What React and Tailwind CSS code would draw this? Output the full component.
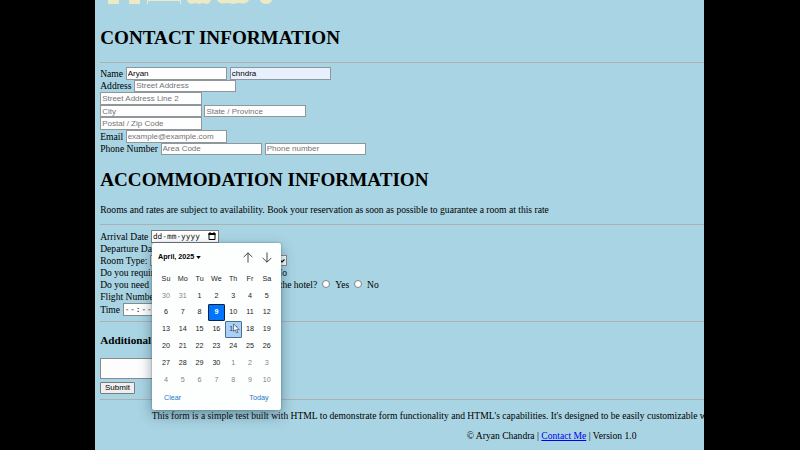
import React from "react";

const serif = "font-['Liberation_Serif',serif]";

function Field({ value, placeholder, className = "" }) {
  return (
    <input
      type="text"
      defaultValue={value}
      placeholder={placeholder}
      className={`box-border h-[12.6px] w-[101.6px] shrink-0 border border-[#8f979b] bg-[#fefefe] px-[1px] py-0 font-['Liberation_Sans',sans-serif] text-[8px] leading-[10px] text-black placeholder:text-[#757575] ${className}`}
    />
  );
}

function Row({ className = "h-[12.6px]", children }) {
  return <div className={`flex items-center gap-[2.6px] whitespace-nowrap ${className}`}>{children}</div>;
}

function Rule({ className = "" }) {
  return <div className={`h-[1px] bg-[#a8b2b3] ${className}`} />;
}

const Radio = () => <span className="mx-[2.4px] mb-[2px] inline-block size-[8px] rounded-full border border-[#7d8589] bg-white" />;

const days = [30, 31, ...Array.from({ length: 30 }, (_, i) => i + 1), ...Array.from({ length: 10 }, (_, i) => i + 1)];

function DayCell({ day, index }) {
  const base = "flex items-center justify-center rounded-[1px]";
  if (index === 10) return <div className={`${base} border border-[#10233e] bg-[#0075ff] font-bold text-white`}>{day}</div>;
  if (index === 18) return <div className={`${base} border border-[#4d6f8e] bg-[#a8d0fa] text-[#28415c]`}>{day}</div>;
  return <div className={`${base} ${index < 2 || index > 31 ? "text-[#858585]" : "text-[#1c1c1c]"}`}>{day}</div>;
}

function Arrow({ down }) {
  return (
    <svg viewBox="0 0 10 11" className={`h-[11px] w-[10px] ${down ? "rotate-180" : ""}`} fill="none" stroke="#333" strokeWidth="0.9">
      <path d="M5 10.5V.8M.7 5.1 5 .8l4.3 4.3" />
    </svg>
  );
}

function Calendar() {
  return (
    <div className="absolute left-[152px] top-[243px] h-[167px] w-[129px] rounded-[2px] bg-[#fdfefe] font-['Liberation_Sans',sans-serif] text-[7.2px] text-[#1c1c1c] shadow-[0_5px_14px_rgba(30,60,75,0.45),0_0_2px_rgba(30,60,75,0.5)]">
      <div className="flex h-[28px] items-center pl-[6px] pr-[9.5px]">
        <span className="text-[7.2px] font-bold text-black">April, 2025</span>
        <svg viewBox="0 0 6 4" className="ml-[2px] h-[3px] w-[5px]"><path d="M0 0h6L3 4z" /></svg>
        <div className="ml-auto flex gap-[9px]">
          <Arrow />
          <Arrow down />
        </div>
      </div>
      <div className="ml-[5.6px] grid w-[117.6px] grid-cols-7">
        {["Su", "Mo", "Tu", "We", "Th", "Fr", "Sa"].map((d) => (
          <div key={d} className="flex h-[16.5px] items-center justify-center">{d}</div>
        ))}
      </div>
      <div className="ml-[5.6px] grid h-[101px] w-[117.6px] grid-cols-7 grid-rows-6">
        {days.map((d, i) => <DayCell key={i} day={d} index={i} />)}
      </div>
      <div className="flex h-[20px] items-center justify-between pl-[12px] pr-[12.5px] text-[#1a78c8]">
        <span>Clear</span>
        <span>Today</span>
      </div>
    </div>
  );
}

export default function App() {
  return (
    <div className="relative h-[450px] w-[800px] overflow-hidden bg-black">
      <main className={`ml-[95px] h-[450px] w-[609px] overflow-hidden bg-[#a9d4e3] pl-[5.2px] text-[9.58px] leading-[11px] text-black ${serif}`}>
        <div className="h-[26.5px] pl-[6px]">
          <svg viewBox="0 0 180 5" className="h-[5px] w-[180px]" fill="#ece9c5">
            <path d="M2 0h11v4H2zM23 0h11v4H23zM41 0h34v4h-1V1H42v3h-1zM81 0h24q-1 4-5 4l-3-1-4 1-4-1-3 1q-4 0-5-4zM111 0h32q-2 3.500-6 3.500l-5-.5-5 1-5-1-5 .5q-4 0-6-3.500zM154 0h12q-1 4-6 4t-6-4z" />
          </svg>
        </div>
        <h1 className="h-[35px] text-[19.15px] font-bold leading-[21px]">CONTACT INFORMATION</h1>
        <Rule className="mb-[4.5px]" />
        <Row><span>Name</span><Field value="Aryan" /><Field value="chndra" className="!bg-[#e8f0fe]" /></Row>
        <Row><span>Address</span><Field placeholder="Street Address" /></Row>
        <Row><Field placeholder="Street Address Line 2" /></Row>
        <Row><Field placeholder="City" /><Field placeholder="State / Province" /></Row>
        <Row><Field placeholder="Postal / Zip Code" /></Row>
        <Row><span>Email</span><Field placeholder="example@example.com" /></Row>
        <Row><span>Phone Number</span><Field placeholder="Area Code" /><Field placeholder="Phone number" /></Row>
        <h1 className="mt-[14px] h-[35px] text-[19.15px] font-bold leading-[21px]">ACCOMMODATION INFORMATION</h1>
        <p className="h-[20px]">Rooms and rates are subject to availability. Book your reservation as soon as possible to guarantee a room at this rate</p>
        <Rule className="mb-[5px]" />
        <Row className="h-[12.2px]">
          <span>Arrival Date</span>
          <span className="flex h-[12.6px] w-[68px] items-center justify-between border border-[#767c80] bg-white pl-[1px] pr-[2px] font-['DejaVu_Sans_Mono',monospace] text-[7.8px] text-[#222]">
            dd-mm-yyyy
            <svg viewBox="0 0 8 8" className="size-[8px]"><path d="M1 1.5h6v6H1z" fill="none" stroke="#000" /><path d="M.5 1h7v2h-7zM1.5 0h1v1h-1zM5.5 0h1v1h-1z" /></svg>
          </span>
        </Row>
        <Row className="h-[12px]"><span>Departure Date</span></Row>
        <Row>
          <span>Room Type:</span>
          <span className="flex h-[11.4px] w-[136.500px] items-center justify-end border border-[#858b8f] bg-white pr-[1px]">
            <svg viewBox="0 0 6 4" className="h-[4px] w-[6px]" fill="none" stroke="#000" strokeWidth="1.2"><path d="m.5.5 2.5 2.5L5.500.5" /></svg>
          </span>
        </Row>
        <Row className="h-[12px]"><span>Do you require</span><span className="ml-[114.500px]">No</span></Row>
        <Row className="h-[12px]"><span>Do you need</span><span className="ml-[128px]">the hotel?</span><Radio /><span>Yes</span><Radio /><span>No</span></Row>
        <Row className="h-[11px]"><span>Flight Number</span></Row>
        <Row className="h-[15px]"><span>Time</span><span className="flex h-[13px] w-[60px] items-center border border-[#858b8f] bg-white pl-[1px] font-['DejaVu_Sans_Mono',monospace] text-[7.8px] tracking-[0.9px]">--:--</span></Row>
        <Rule className="mt-[4px]" />
        <h3 className="mt-[12px] h-[24px] text-[11.2px] font-bold leading-[13px]">Additional</h3>
        <div className="h-[21.5px] w-[110px] border border-[#858b8f] bg-[#fdfdfe]" />
        <button className="mt-[2.5px] block h-[12.4px] w-[34.5px] rounded-[1px] border border-[#767c80] bg-[#efefef] font-['Liberation_Sans',sans-serif] text-[8px] leading-[10px]">Submit</button>
        <Rule className="mt-[5px]" />
        <footer className="whitespace-nowrap">
          <p className="mt-[9.5px] pl-[51.5px]">This form is a simple test built with HTML to demonstrate form functionality and HTML's capabilities. It's designed to be easily customizable with CSS.</p>
          <p className="mt-[9.5px] pl-[366.5px]">© Aryan Chandra | <a href="#contact" className="text-[#0000ee] underline">Contact Me</a> | Version 1.0</p>
        </footer>
      </main>
      <Calendar />
      <svg viewBox="0 0 8 12" className="absolute left-[233px] top-[323px] h-[11px] w-[7px]"><path d="M.7.8v8.500l2-1.700 1.300 3.400 1.500-.6-1.400-3.200H7z" fill="#fff" stroke="#333" strokeWidth=".7" /></svg>
    </div>
  );
}
